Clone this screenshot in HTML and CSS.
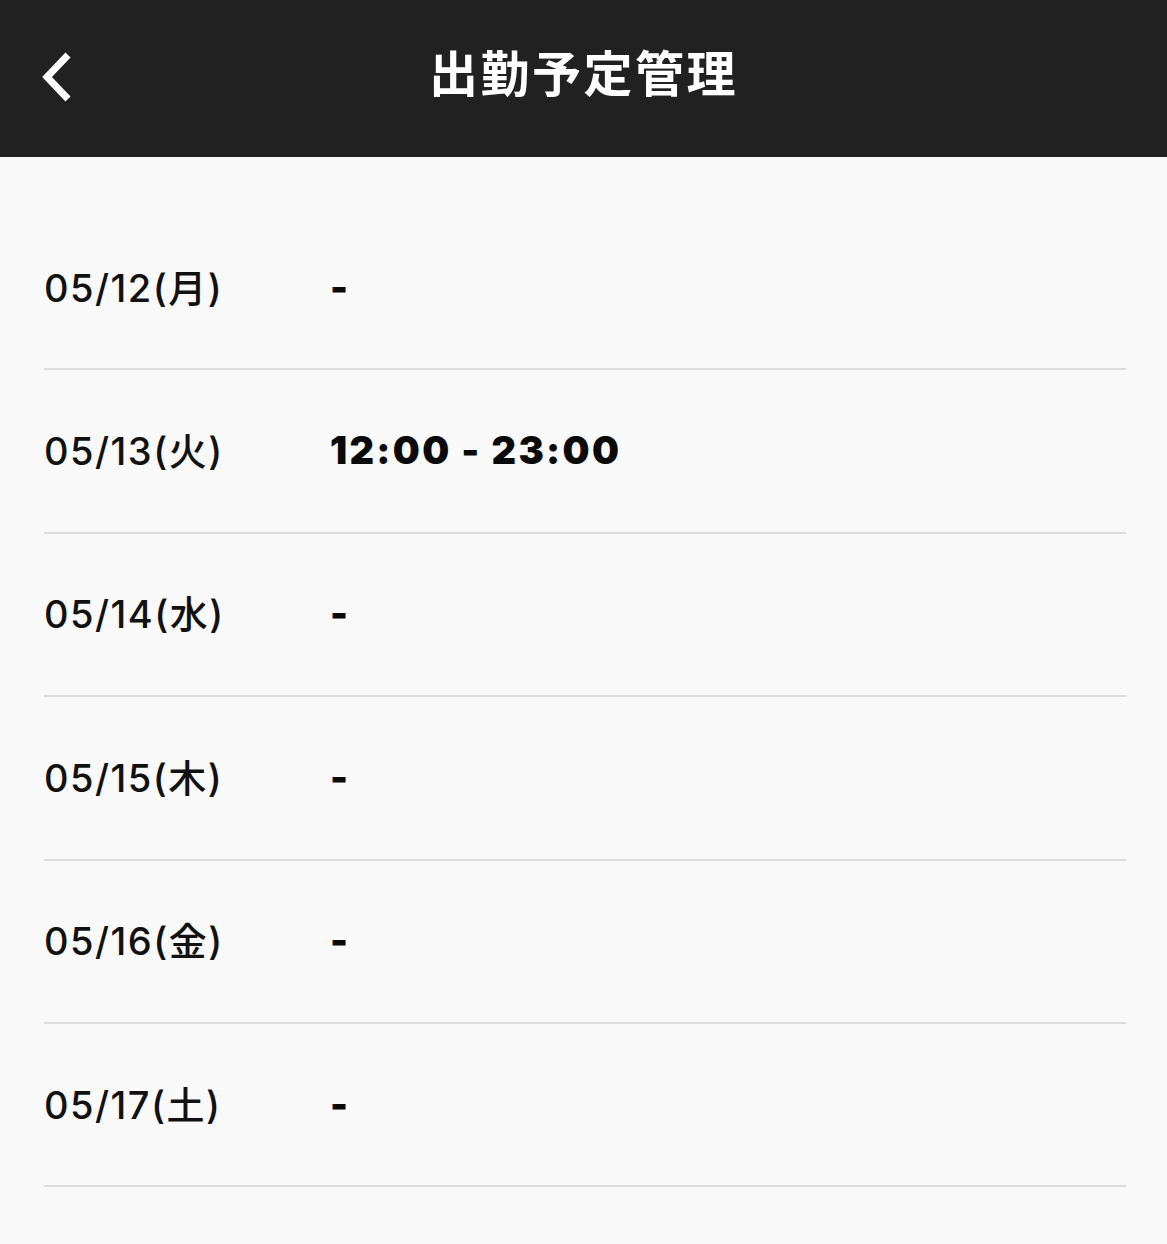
FILE: index.html
```html
<!DOCTYPE html>
<html lang="ja">
<head>
  <meta charset="utf-8">
  <title>出勤予定管理</title>
  <link rel="stylesheet" href="styles.css">
</head>
<body>
  <header class="topbar">
    <a class="back" href="#" aria-label="戻る">
      <svg width="40" height="60" viewBox="0 0 40 60">
        <path d="M30 13 L9 35 L30 57" fill="none" stroke="#fff" stroke-width="7" stroke-linejoin="miter"/>
      </svg>
    </a>
    <h1 class="title">出勤予定管理</h1>
  </header>

  <ul class="schedule">
    <li class="row"><span class="date">05/12(月)</span><span class="time">-</span></li>
    <li class="row"><span class="date">05/13(火)</span><span class="time">12:00 - 23:00</span></li>
    <li class="row"><span class="date">05/14(水)</span><span class="time">-</span></li>
    <li class="row"><span class="date">05/15(木)</span><span class="time">-</span></li>
    <li class="row"><span class="date">05/16(金)</span><span class="time">-</span></li>
    <li class="row"><span class="date">05/17(土)</span><span class="time">-</span></li>
  </ul>
</body>
</html>
```

FILE: styles.css
```css
body {
  margin: 0;
  background-color: #f9f9f9;
  font-family: Inter, "Noto Sans CJK JP", sans-serif;
  color: #111;
}
.topbar {
  position: relative;
  height: 157px;
  background-color: #212121;
  display: flex;
  align-items: center;
  justify-content: center;
}
.back {
  position: absolute;
  left: 38px;
  top: 42px;
  display: block;
  width: 40px;
  height: 60px;
}
.title {
  margin: 0 0 16px;
  color: #fff;
  font-family: "Noto Sans CJK JP", sans-serif;
  font-size: 49px;
  font-weight: 700;
  letter-spacing: 2.5px;
}
.schedule {
  list-style: none;
  margin: 0 41px 0 44px;
  padding: 50px 0 0;
}
.row {
  height: 161.4px;
  border-bottom: 2px solid #dcdcdc;
  display: flex;
  align-items: center;
}
.date {
  width: 286px;
  padding-bottom: 5px;
  font-size: 38px;
  font-weight: 500;
  letter-spacing: 1.5px;
}
.time {
  padding-bottom: 2px;
  font-size: 38px;
  font-weight: 900;
  letter-spacing: 2.3px;
  color: #0a0a0a;
}
```
